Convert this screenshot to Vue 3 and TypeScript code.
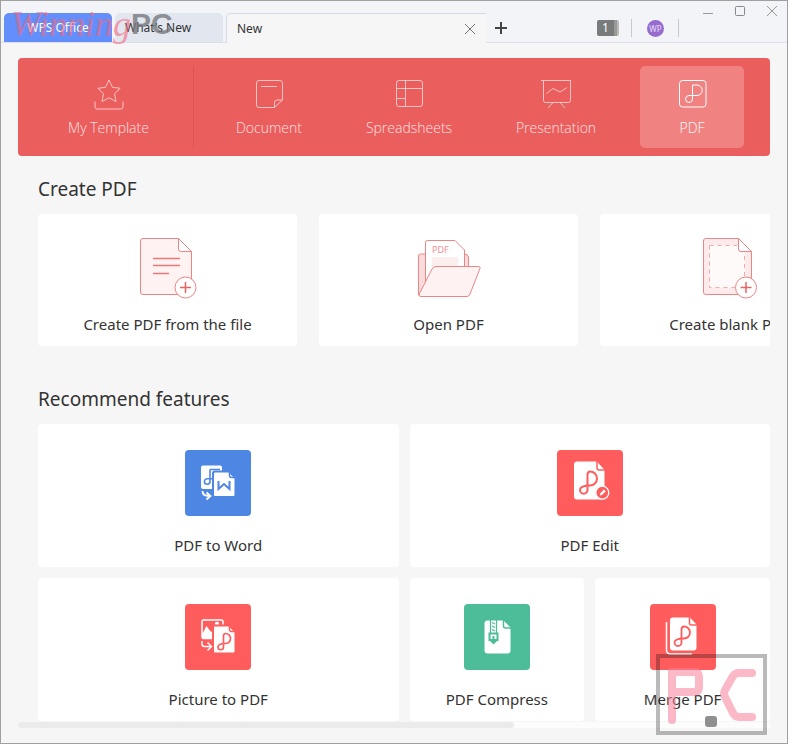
<script setup lang="ts">
import { ref } from 'vue'

type Glyph = 'template' | 'document' | 'sheet' | 'slides' | 'pdf'
interface Category { id: Glyph; label: string }
interface Creator { id: 'file' | 'open' | 'blank'; label: string }
interface Feature { id: 'word' | 'edit' | 'picture' | 'compress' | 'merge'; label: string; wide: boolean }

const categories: Category[] = [
  { id: 'template', label: 'My Template' },
  { id: 'document', label: 'Document' },
  { id: 'sheet', label: 'Spreadsheets' },
  { id: 'slides', label: 'Presentation' },
  { id: 'pdf', label: 'PDF' },
]
const creators: Creator[] = [
  { id: 'file', label: 'Create PDF from the file' },
  { id: 'open', label: 'Open PDF' },
  { id: 'blank', label: 'Create blank PDF' },
]
const features: Feature[] = [
  { id: 'word', label: 'PDF to Word', wide: true },
  { id: 'edit', label: 'PDF Edit', wide: true },
  { id: 'picture', label: 'Picture to PDF', wide: true },
  { id: 'compress', label: 'PDF Compress', wide: false },
  { id: 'merge', label: 'Merge PDF', wide: false },
]
const active = ref<Glyph>('pdf')
</script>

<template>
  <div class="window">
    <header class="titlebar">
      <nav class="tabs">
        <button class="tab home" type="button">WPS Office</button>
        <button class="tab news" type="button">What's New</button>
        <div class="tab current">
          <span>New</span>
          <button class="icon-btn" type="button" aria-label="Close tab">
            <svg width="12" height="12" viewBox="0 0 12 12"><path d="M1 1l10 10M11 1L1 11" stroke="#777" fill="none" /></svg>
          </button>
        </div>
        <button class="icon-btn add" type="button" aria-label="New tab">
          <svg width="14" height="14" viewBox="0 0 14 14"><path d="M7 1v12M1 7h12" stroke="#444" stroke-width="2" fill="none" /></svg>
        </button>
      </nav>
      <div class="tools">
        <button class="badge" type="button">1</button>
        <span class="divider"></span>
        <button class="avatar" type="button">WP</button>
        <span class="divider"></span>
      </div>
      <div class="controls">
        <button class="icon-btn" type="button" aria-label="Minimize">
          <svg width="12" height="12" viewBox="0 0 12 12"><path d="M1 8.500h10" stroke="#999" /></svg>
        </button>
        <button class="icon-btn" type="button" aria-label="Maximize">
          <svg width="12" height="12" viewBox="0 0 12 12"><rect x="1.500" y="1.500" width="9" height="9" rx="1" stroke="#888" fill="none" /></svg>
        </button>
        <button class="icon-btn" type="button" aria-label="Close">
          <svg width="12" height="12" viewBox="0 0 12 12"><path d="M1 1l10 10M11 1L1 11" stroke="#999" fill="none" /></svg>
        </button>
      </div>
      <div class="brand"><i>Winning</i><b>PC</b></div>
    </header>

    <main>
      <nav class="banner">
        <button
          v-for="c in categories"
          :key="c.id"
          type="button"
          :class="['category', c.id, { active: active === c.id }]"
          @click="active = c.id"
        >
          <svg width="32" height="32" viewBox="0 0 32 32">
            <template v-if="c.id === 'template'">
              <path d="M16 2l3.500 7.300 7.700 1-5.700 5.400 1.500 7.800-7-3.700-7 3.700 1.500-7.800-5.700-5.400 7.700-1z" />
              <path d="M2 23.500v5.500q0 2 2 2h24q2 0 2-2v-5.500" />
            </template>
            <template v-else-if="c.id === 'document'">
              <path d="M6 2.500h21q2.500 0 2.500 2.500v17l-8 7.500H6q-2.500 0-2.500-2.500V5q0-2.500 2.500-2.500zM29.500 22h-5.500q-2.500 0-2.500 2.500v5M8 8.500h16" />
            </template>
            <template v-else-if="c.id === 'sheet'">
              <rect x="3.500" y="2.500" width="26" height="26" rx="2.500" />
              <path d="M3.500 10.500h26M12.500 2.500v26M3.500 20.500h9" />
            </template>
            <template v-else-if="c.id === 'slides'">
              <path d="M1 2.500h30M3.500 2.500v20q0 2 2 2h23q2 0 2-2v-20M13 24.500l-5 5.500M20 24.500l5 5.500M6.500 15.500l6.500-5 7 3.500 7-4.500" />
            </template>
            <template v-else>
              <rect x="3.500" y="2.500" width="26.500" height="26.500" rx="3" />
              <path d="M16.500 7h4.500a5 5 0 0 1 0 10.500h-8a3.500 3.500 0 0 0 0 7a3.500 3.500 0 0 0 3.500-3.500z" />
            </template>
          </svg>
          <span>{{ c.label }}</span>
        </button>
      </nav>

      <section class="create">
        <h2>Create PDF</h2>
        <div class="create-row">
          <button v-for="c in creators" :key="c.id" class="card creator" type="button">
            <svg v-if="c.id === 'open'" width="64" height="64" viewBox="0 0 64 64" stroke="#ee8585">
              <path d="M1.500 59V20q0-2 2-2H47q4 0 4.500 3v9L42 60H3z" fill="#fbdcdc" />
              <path d="M8.500 50V6.500q0-2 2-2H38L47.500 14v30z" fill="#fff" />
              <rect x="15" y="21" width="26" height="12" fill="#fdeeee" stroke="none" />
              <text x="15" y="17" font-size="9" fill="#ee9090" stroke="none">PDF</text>
              <path d="M19 30.500H61.500q2 0 1.500 2L53 58q-1 2.500-3 2.500H3.500q-2 0-1-3L15 33q1.500-2.500 4-2.500z" fill="#fff2f2" />
            </svg>
            <svg v-else-if="c.id === 'file'" width="58" height="64" viewBox="0 0 58 64" stroke="#ee8585">
              <path d="M4 2.500H39.500L52.500 15.500V56q0 2.500-2.500 2.500H4q-2.500 0-2.500-2.500V5q0-2.500 2.500-2.500z" fill="#fff2f2" />
              <path d="M39.500 2.500v10.500q0 2.500 2.500 2.500h10.500z" fill="#fff" />
              <path d="M14 22.500h27M14 29.500h27M14 37.500h16" stroke="#ec7777" stroke-width="1.500" />
              <circle cx="46.500" cy="51.500" r="10.500" fill="#fff" />
              <path d="M46.500 46v11M41 51.500h11" stroke="#ea6464" stroke-width="1.500" />
            </svg>
            <svg v-else width="58" height="64" viewBox="0 0 58 64" stroke="#ee8585">
              <path d="M4.500 2.500H37.500L50.500 15.500V56q0 2.500-2.500 2.500H4.500q-2 0-2-2.500V5q0-2.500 2-2.500z" fill="#fdeaea" />
              <path d="M8.500 9.500H37l6.500 6V51.500H8.500z" fill="#fffafa" stroke="none" />
              <path d="M8.500 9.500H36M8.500 9.500v42H34M43.500 20v20" fill="none" stroke-dasharray="4 4" stroke="#f2aaaa" />
              <path d="M37.500 2.500v10.500q0 2.500 2.500 2.500h10.500z" fill="#fff" />
              <circle cx="45" cy="51.500" r="10.500" fill="#fff" />
              <path d="M45 46v11M39.500 51.500h11" stroke="#ea6464" stroke-width="1.500" />
            </svg>
            <span>{{ c.label }}</span>
          </button>
        </div>
      </section>

      <section class="recommend">
        <h2>Recommend features</h2>
        <div class="feature-grid">
          <button v-for="f in features" :key="f.id" type="button" :class="['card', 'feature', f.id, { wide: f.wide }]">
            <svg width="66" height="66" viewBox="0 0 66 66" fill="none">
              <rect class="tile" width="66" height="66" rx="4" />
              <template v-if="f.id === 'word'">
                <rect x="16" y="15.500" width="21" height="23.500" rx="2" fill="#fff" />
                <path class="ink" d="M25 19.500h10M25 19.500v12a2.800 2.800 0 1 1-2.800-2.800H29" stroke-width="1.600" />
                <path class="page" d="M30 21.500H44l6.500 6.500V45q0 2-2 2H30q-2 0-2-2V23.500q0-2 2-2z" />
                <path class="ink" d="M44.500 21.500v4q0 2 2 2h4" stroke-width="1.500" />
                <path class="ink" d="M33.500 31v8l5.500-5 5.500 5v-8" stroke-width="2" />
                <path d="M17.500 41q0 5 6.500 5M21.500 42.500l4 3.500-4 3.500" stroke="#fff" stroke-width="1.800" />
              </template>
              <template v-else-if="f.id === 'edit'">
                <path d="M20 11.500H40l7.500 8.500V46.500q0 3-3 3H20q-3 0-3-3V14.500q0-3 3-3z" fill="#fff" />
                <path class="ink" d="M40 11v7q0 2 2 2h6" stroke-width="1.500" />
                <path class="ink" d="M30.500 40V25q0-3.500 2.500-3.500a7 7 0 0 1 0 14Q23 35.500 23 40a3.700 3.700 0 0 0 7.500 0z" stroke-width="2" />
                <circle class="tile" cx="45.300" cy="42.700" r="6.500" stroke="#fff" stroke-width="1.300" />
                <path d="M42.800 45.500l.5-2.200 3.700-3.700 1.700 1.700-3.700 3.700z" fill="#fff" />
              </template>
              <template v-else-if="f.id === 'picture'">
                <rect x="17" y="16" width="21" height="18.500" rx="1.500" stroke="#fff" stroke-width="1.500" />
                <path d="M17 34.500v-4l4.500-8.500 4.500 6 3-2v8.500z" fill="#fff" />
                <circle cx="32" cy="20" r="2.200" fill="#fff" />
                <path class="page" d="M30 21.500H44.500l6 6.500V47.500q0 2-2 2H30q-2 0-2-2V23.500q0-2 2-2z" />
                <path class="ink" d="M44.500 21.500v4q0 2 2 2h4" stroke-width="1.500" />
                <path class="ink" d="M38.500 43V32q0-2.500 2-2.500a5 5 0 0 1 0 10Q33 39.500 33 43a2.750 2.750 0 0 0 5.500 0z" stroke-width="1.700" />
                <path d="M17 37v3q0 2.500 2.500 2.500H26M22.500 38.500l4 4-4 4" stroke="#fff" stroke-width="1.400" />
              </template>
              <template v-else-if="f.id === 'compress'">
                <path d="M23.500 16.500H39.500l7 7V46.500q0 3-3 3H23.500q-3 0-3-3V19.500q0-3 3-3z" fill="#fff" />
                <path class="ink" d="M39.500 16v6q0 2 2 2h5.500" stroke-width="1.500" />
                <path class="ink" d="M26.500 16v13M32.500 16v13M28 18.500l3 1.500M28 22l3 1.500M28 25.500l3 1.500" stroke-width="1.300" />
                <path class="page" d="M25.500 29.500h8v6.500h-8z" />
                <path class="ink" d="M29.500 32v7.500M26.500 36l3 3 3-3" stroke-width="2" />
              </template>
              <template v-else>
                <path d="M16.500 18v28q0 4 4 4H42" stroke="#fff" stroke-width="1.500" />
                <path d="M23 13.500H40l6.500 7V43.500q0 3-3 3H23q-3 0-3-3V16.500q0-3 3-3z" fill="#fff" />
                <path class="ink" d="M39.500 13v6q0 2 2 2h5.500" stroke-width="1.500" />
                <path class="ink" d="M31.500 38.500V26q0-3.500 2.500-3.500a6 6 0 0 1 0 12Q24.500 34.500 24.500 38.500a3.500 3.500 0 0 0 7 0z" stroke-width="1.800" />
              </template>
            </svg>
            <span>{{ f.label }}</span>
          </button>
        </div>
      </section>
      <div class="scrollbar"><div class="thumb"></div></div>
    </main>

    <svg class="stamp" width="111" height="81" viewBox="0 0 111 81" fill="none" aria-hidden="true">
      <rect x="2" y="2" width="107" height="77" stroke="#000" stroke-opacity=".27" stroke-width="4" />
      <g stroke="#f87f9b" stroke-opacity=".55" stroke-width="8" stroke-linecap="round" stroke-linejoin="round">
        <path d="M16 66V18H38Q43 18 43 23V33Q43 38 38 38H20" />
        <path d="M96 19H83Q79 19 77 22L69 36Q67 40 69 43L77 59Q79 63 83 63H96" />
      </g>
      <rect x="49" y="62" width="12" height="11" rx="3" fill="#8f8f8f" />
    </svg>
  </div>
</template>

<style>
body { background: #f6f6f6; }
</style>

<style scoped>
* { box-sizing: border-box; }
.window {
  position: relative;
  min-height: 100vh;
  border: 1px solid #a0a0a0;
  background: #f6f6f6;
  color: #333;
  font-family: "Noto Sans", "Open Sans", sans-serif;
  font-size: 15px;
  overflow: hidden;
}
button {
  border: 0;
  padding: 0;
  margin: 0;
  background: none;
  color: inherit;
  font: inherit;
}
svg { display: block; flex: none; }
.titlebar {
  position: relative;
  display: flex;
  height: 42px;
  background: #f2f4f8;
  box-shadow: inset 0 -1px #dcdfea;
  font-size: 12px;
}
.tabs { display: flex; align-items: flex-end; padding-left: 3px; }
.tab { height: 30px; border-radius: 5px 5px 0 0; }
.home, .news { width: 108px; height: 29px; margin: 0 3px 1px 0; }
.home { background: #628ffb; color: #fff; }
.news { padding-left: 10px; background: #e2e6ef; text-align: left; }
.current {
  display: flex;
  align-items: center;
  justify-content: space-between;
  width: 260px;
  padding: 0 10px;
  border: solid #d3dae6;
  border-width: 1px 0 0 1px;
  border-radius: 5px 0 0 0;
  background: #f6f6f6;
}
.icon-btn { display: grid; place-items: center; }
.add { width: 30px; height: 30px; }
.tools { display: flex; align-items: center; margin: 12px 0 0 auto; }
.badge {
  width: 22px;
  height: 16px;
  padding-right: 5px;
  border-radius: 2px;
  background: linear-gradient(90deg, #777b7b 17px, #999 17px 20px, #bbb 20px);
  color: #fff;
  line-height: 16px;
}
.divider { width: 1px; height: 18px; background: #c8cace; }
.badge + .divider { margin: 0 15px 0 12px; }
.avatar {
  width: 17px;
  height: 17px;
  margin-right: 14px;
  border-radius: 50%;
  background: #966ccf;
  color: #e6dcf5;
  font-size: 8px;
  line-height: 17px;
}
.controls { display: flex; gap: 20px; align-items: flex-start; padding: 4px 9px 0 23px; }
.brand {
  position: absolute;
  left: 10px;
  top: 1px;
  display: flex;
  align-items: center;
  height: 44px;
  pointer-events: none;
}
.brand i { color: #f4677c; opacity: .6; font: italic 36px "Liberation Serif", serif; }
.brand b { color: #777a80; opacity: .8; font: bold 30px "Liberation Sans", sans-serif; }

main { padding: 15px 17px 0; }
.banner {
  display: grid;
  grid-template-columns: 176fr 150fr 130fr 164fr 108fr;
  padding: 8px 24px 8px 0;
  height: 98px;
  border-radius: 4px;
  background: #eb5e5e;
}
.category {
  display: flex;
  flex-direction: column;
  align-items: center;
  gap: 8px;
  height: 82px;
  padding-top: 12px;
  border-radius: 5px;
  color: #fde0e0;
  font-family: "Open Sans", "Noto Sans", sans-serif;
  font-size: 14px;
  font-weight: 300;
  line-height: 20px;
}
.category svg { fill: none; stroke: #f9c4c4; }
.template { padding-left: 6px; border-right: 1px solid #dc5656; border-radius: 0; }
.active { margin: 0 2px; background: #f08282; color: #fff; }
.active svg { stroke: #fff; }

section { padding-left: 20px; }
h2 { margin: 0 0 11px; font-size: 19px; font-weight: 400; line-height: 28px; }
.create { padding-top: 19px; }
.create-row { display: flex; gap: 22px; overflow: hidden; }
.card {
  display: flex;
  flex-direction: column;
  align-items: center;
  border-radius: 4px;
  background: #fff;
  line-height: 20px;
}
.creator { flex: 0 0 259px; height: 132px; padding-top: 22px; gap: 14px; }
.recommend { padding-top: 39px; }
.feature-grid { display: grid; grid-template-columns: repeat(4, 1fr); gap: 11px; }
.feature { height: 143px; padding-top: 26px; gap: 19px; }
.wide { grid-column: span 2; }
.tile { fill: #ff5d5d; }
.page { fill: #fff; stroke: #ff5d5d; stroke-width: 2px; }
.ink { stroke: #ff5d5d; }
.word .tile { fill: #4e86e4; }
.word .page, .word .ink { stroke: #4e86e4; }
.compress .tile { fill: #4dbc98; }
.compress .page, .compress .ink { stroke: #4dbc98; }
.scrollbar { height: 6px; margin-top: 1px; background: #fcfcfc; }
.thumb { width: 66%; height: 6px; border-radius: 3px; background: #ebebeb; }
.stamp { position: absolute; right: 20px; bottom: 8px; }
</style>
